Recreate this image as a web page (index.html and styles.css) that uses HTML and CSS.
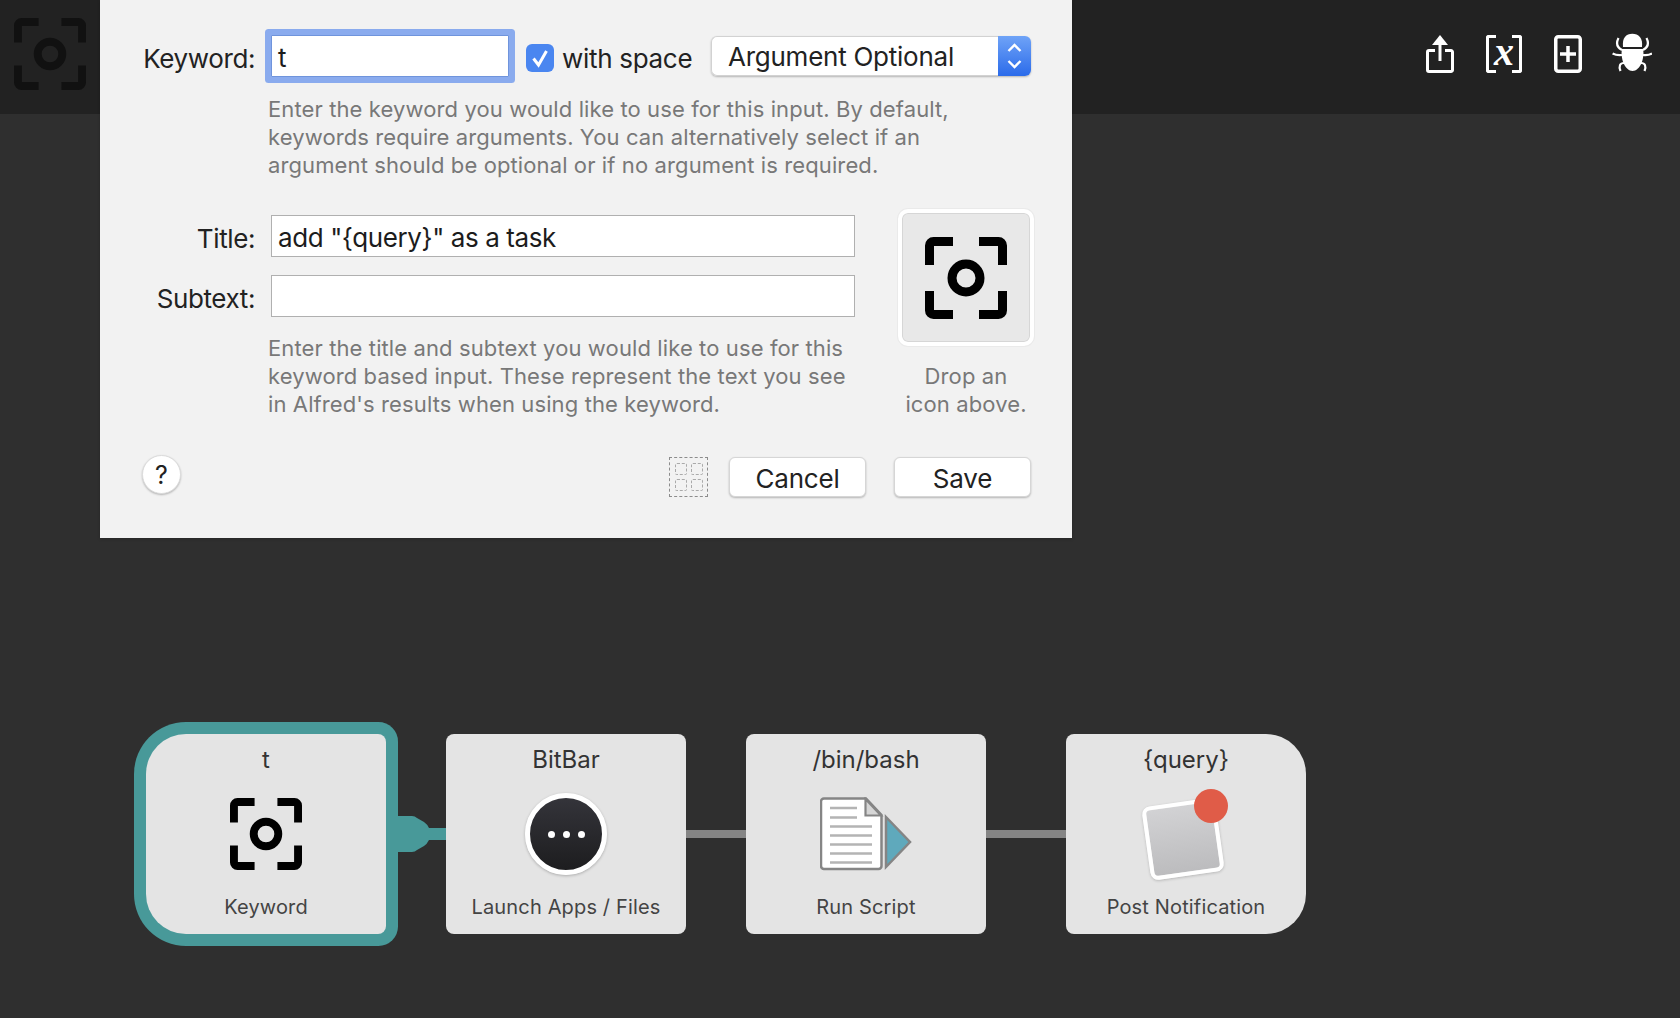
FILE: index.html
```html
<!DOCTYPE html>
<html lang="en">
<head>
<meta charset="utf-8">
<title>Workflow editor</title>
<link rel="stylesheet" href="styles.css">
</head>
<body>
<svg class="defs" width="0" height="0" aria-hidden="true">
  <symbol id="focus" viewBox="0 0 82 82">
    <g fill="none" stroke="currentColor" stroke-width="9">
      <path d="M28 4.500H8.500a4 4 0 0 0-4 4V28"/>
      <path d="M54 4.500H73.500a4 4 0 0 1 4 4V28"/>
      <path d="M28 77.500H8.500a4 4 0 0 1-4-4V54"/>
      <path d="M54 77.500H73.500a4 4 0 0 0 4-4V54"/>
      <circle cx="41" cy="41" r="14"/>
    </g>
  </symbol>
</svg>
<div class="app">
  <header class="toolbar">
    <svg class="tb-logo"><use href="#focus"/></svg>
    <div class="tb-actions">
      <svg class="tb-icon" viewBox="0 0 28 38" fill="none" stroke="#fff" stroke-width="3">
        <path d="M9 15.500H3a1.500 1.500 0 0 0-1.500 1.500V35a1.500 1.500 0 0 0 1.500 1.500H25a1.500 1.500 0 0 0 1.500-1.500V17a1.500 1.500 0 0 0-1.500-1.500H19"/>
        <path d="M14 8V26"/>
        <path d="M14 0L22 10H6Z" fill="#fff" stroke="none"/>
      </svg>
      <div class="tb-var"><span class="tb-x">x</span></div>
      <svg class="tb-icon" viewBox="0 0 28 38" fill="none" stroke="#fff">
        <rect x="1.750" y="1.750" width="24.500" height="34.500" rx="2.500" stroke-width="3.500"/>
        <path d="M14 11V27M6 19H22" stroke-width="3.500"/>
      </svg>
      <svg class="tb-bug" viewBox="0 0 40 40" fill="none" stroke="#fff" stroke-width="2.200">
        <path d="M11 14C10 5 14 .8 20.300 .8S31 5 30 14Z" fill="#fff" stroke="none"/>
        <path d="M10 16H31C33 25 28 38 20.500 38S8 25 10 16Z" fill="#fff" stroke="none"/>
        <path d="M10 17C6 15 3.500 11 6.500 5M31 17C35 15 37.500 11 34.500 5"/>
        <path d="M10 22C6 22.500 3.500 22 .6 20.500M31 22C35 22.500 37.500 22 40 20.500"/>
        <path d="M12 30C8 30 6.500 33 8.500 38M29 30C33 30 34.500 33 32.500 38"/>
      </svg>
    </div>
  </header>

  <main class="canvas">
    <article class="node node-first selected">
      <h3 class="node-title">t</h3>
      <div class="node-icon"><svg class="icon-keyword"><use href="#focus"/></svg></div>
      <p class="node-label">Keyword</p>
    </article>
    <svg class="link link-active" viewBox="0 0 60 40" width="60" height="40">
      <path d="M0 2H26Q29 2 31 4L38 8Q41 10 43 14H60V26H43Q41 30 38 32L31 36Q29 38 26 38H0Z" fill="#489999"/>
    </svg>
    <article class="node">
      <h3 class="node-title">BitBar</h3>
      <div class="node-icon"><div class="launch"><i></i><i></i><i></i></div></div>
      <p class="node-label">Launch Apps / Files</p>
    </article>
    <div class="link-line"></div>
    <article class="node">
      <h3 class="node-title">/bin/bash</h3>
      <div class="node-icon">
        <svg class="icon-script" viewBox="0 0 92 74" width="92" height="74">
          <path d="M4 1.500H46L61.500 18V69a3 3 0 0 1-3 3H4a3 3 0 0 1-3-3V4.500a3 3 0 0 1 3-3Z" fill="#fff" stroke="#858585" stroke-width="2.500"/>
          <path d="M45.500 2V18.500H61Z" fill="#d6d6d6" stroke="#858585" stroke-width="2.200"/>
          <g stroke="#b4b4b4" stroke-width="2.500">
            <path d="M10 11H37M10 20.500H37M10 29.500H52M10 38.500H52M10 47.500H52M10 56.500H52M10 65.500H52"/>
          </g>
          <path d="M66 20L90 45L66 70Z" fill="#5fa9bc" stroke="#858585" stroke-width="2.500"/>
        </svg>
      </div>
      <p class="node-label">Run Script</p>
    </article>
    <div class="link-line link-long"></div>
    <article class="node node-last">
      <h3 class="node-title">{query}</h3>
      <div class="node-icon">
        <div class="notify"><div class="notify-card"></div><div class="notify-dot"></div></div>
      </div>
      <p class="node-label">Post Notification</p>
    </article>
  </main>

  <section class="dialog">
    <div class="row-keyword">
      <span class="label">Keyword:</span>
      <div class="field field-focus">t</div>
      <span class="check"><svg viewBox="0 0 28 28" width="28" height="28" fill="none" stroke="#fff" stroke-width="3"><path d="M7.500 14.500L12.500 21L20.500 7"/></svg></span>
      <span class="check-text">with space</span>
      <div class="select">
        <span class="select-value">Argument Optional</span>
        <span class="select-arrows"><svg viewBox="0 0 33 40" width="33" height="40" fill="none" stroke="#fff" stroke-width="2.400"><path d="M10.500 15L16.500 9L22.500 15M10.500 25L16.500 31L22.500 25"/></svg></span>
      </div>
    </div>
    <p class="help help-keyword">Enter the keyword you would like to use for this input. By default,<br>keywords require arguments. You can alternatively select if an<br>argument should be optional or if no argument is required.</p>

    <div class="details">
      <div class="details-main">
        <div class="row-field">
          <span class="label">Title:</span>
          <div class="field field-wide">add "{query}" as a task</div>
        </div>
        <div class="row-field">
          <span class="label">Subtext:</span>
          <div class="field field-wide"></div>
        </div>
        <p class="help help-title">Enter the title and subtext you would like to use for this<br>keyword based input. These represent the text you see<br>in Alfred's results when using the keyword.</p>
      </div>
      <div class="details-side">
        <div class="well"><svg class="well-icon"><use href="#focus"/></svg></div>
        <p class="help well-text">Drop an<br>icon above.</p>
      </div>
    </div>

    <footer class="dialog-foot">
      <button class="help-btn">?</button>
      <div class="drop-grid"><i></i><i></i><i></i><i></i></div>
      <button class="btn">Cancel</button>
      <button class="btn btn-save">Save</button>
    </footer>
  </section>
</div>
</body>
</html>
```

FILE: styles.css
```css
* { box-sizing: border-box; }
html, body { margin: 0; height: 100%; }
body {
  background: #2f2f2f;
  font-family: Inter, "Liberation Sans", sans-serif;
  overflow: hidden;
}
.defs { position: absolute; }
.app { position: relative; width: 1680px; height: 1018px; overflow: hidden; }

/* toolbar */
.toolbar {
  height: 114px;
  background: #222;
  display: flex;
  align-items: flex-start;
  padding: 18px 28px 0 14px;
}
.tb-logo { width: 72px; height: 72px; color: #111; }
.tb-actions { margin-left: auto; display: flex; align-items: flex-start; gap: 32px; padding-top: 17px; }
.tb-icon { height: 38px; width: 28px; display: block; }
.tb-var {
  width: 36px; height: 38px;
  display: flex; align-items: center; justify-content: center;
  position: relative;
}
.tb-var::before, .tb-var::after {
  content: "";
  position: absolute; top: 0; bottom: 0;
  width: 7px;
  border: 3px solid #fff;
}
.tb-var::before { left: 0; border-right: 0; border-radius: 3px 0 0 3px; }
.tb-var::after { right: 0; border-left: 0; border-radius: 0 3px 3px 0; }
.tb-x { font: italic bold 40px/38px "Liberation Serif", serif; color: #fff; margin-top: -4px; }
.tb-bug { width: 40px; height: 40px; margin: -2px 0 0 -2px; }

/* canvas */
.canvas { display: flex; align-items: center; padding: 620px 0 0 146px; }
.node {
  width: 240px;
  height: 200px;
  flex: none;
  background: #e4e4e4;
  border-radius: 8px;
  display: flex;
  flex-direction: column;
  align-items: center;
  color: #333;
}
.node-first { border-radius: 40px 8px 8px 40px; }
.node-last { border-radius: 8px 40px 40px 8px; }
.selected { box-shadow: 0 0 0 12px #489999; }
.node-title { margin: 12px 0 0; font-size: 24px; line-height: 28px; font-weight: 400; color: #333; }
.node-icon { height: 100px; margin-top: 10px; display: flex; align-items: center; justify-content: center; width: 100%; }
.node-label { margin: 10px 0 0; font-size: 20px; line-height: 26px; letter-spacing: .15px; color: #444; }
.icon-keyword { width: 72px; height: 72px; color: #000; }

.link-active { flex: none; }
.link-line { width: 60px; height: 8px; background: #858585; flex: none; }
.link-long { width: 80px; }

.launch {
  width: 82px; height: 82px; border-radius: 50%;
  border: 5px solid #fff;
  background: linear-gradient(#34343a, #1d1d1f);
  box-shadow: 0 1px 3px rgba(0,0,0,.25);
  display: flex; align-items: center; justify-content: center; gap: 8px;
}
.launch i { width: 7px; height: 7px; border-radius: 50%; background: #fff; }
.notify { position: relative; width: 92px; height: 90px; }
.notify-card {
  position: absolute; left: 6px; top: 13px;
  width: 74px; height: 74px;
  border: 4px solid #fff; border-radius: 8px;
  background: linear-gradient(#d2d2d4, #bcbcbe);
  box-shadow: 0 1px 3px rgba(0,0,0,.2);
  transform: rotate(-8deg);
}
.notify-dot {
  position: absolute; left: 54px; top: 0;
  width: 34px; height: 34px; border-radius: 50%;
  background: #e05c48;
}

/* dialog */
.dialog {
  position: absolute; left: 100px; top: 0;
  width: 972px; height: 538px;
  background: #f2f2f2;
  box-shadow: 0 1px 3px rgba(0,0,0,.2);
  padding: 35px 41px 0 0;
  color: #222;
}
.label { width: 155px; height: 42px; text-align: right; font-size: 26px; line-height: 48px; flex: none; color: #222; letter-spacing: -.4px; }
.row-keyword { display: flex; align-items: center; height: 42px; }
.field {
  height: 42px;
  background: #fff;
  border: 1px solid #b0b0b0;
  font-size: 26px;
  line-height: 44px;
  padding-left: 6px;
  color: #1c1c1c;
  letter-spacing: -.4px;
}
.field-focus {
  width: 238px;
  margin-left: 16px;
  border-color: #6f94dc;
  box-shadow: 0 0 0 6px #8aabee;
  border-radius: 1px;
}
.check {
  width: 28px; height: 28px; margin-left: 17px; margin-top: 4px;
  background: #4a86f0; border-radius: 6px; flex: none;
}
.check svg { display: block; }
.check-text { margin-left: 8px; font-size: 26px; line-height: 42px; margin-top: 6px; color: #222; letter-spacing: -.3px; }
.select {
  margin-left: auto;
  width: 320px; height: 40px;
  border-radius: 6px;
  box-shadow: 0 1px 2px rgba(0,0,0,.25);
  display: flex;
}
.select-value {
  flex: 1;
  background: #fff;
  border: 1px solid #d2d2d2;
  border-right: 0;
  border-radius: 6px 0 0 6px;
  padding-left: 16px;
  font-size: 26px;
  line-height: 40px;
  color: #222;
  letter-spacing: -.25px;
}
.select-arrows { width: 33px; background: linear-gradient(#6fa3f7, #2b6bea); flex: none; border-radius: 0 6px 6px 0; }
.select-arrows svg { display: block; }

.help { margin: 0; font-size: 22px; line-height: 28px; color: #787878; letter-spacing: .11px; }
.help-keyword { margin: 18px 0 0 168px; height: 84px; }

.details { display: flex; margin-top: 30px; }
.details-main { width: 755px; flex: none; padding-top: 6px; }
.row-field { display: flex; align-items: center; margin-bottom: 18px; }
.field-wide { width: 584px; margin-left: 16px; }
.help-title { margin: -1px 0 0 168px; }
.details-side { width: 136px; margin-left: 43px; flex: none; text-align: center; }
.well {
  width: 136px; height: 137px;
  background: #e8e8e8;
  background-clip: padding-box;
  border: 4px solid #fff;
  border-radius: 10px;
  display: flex; align-items: center; justify-content: center;
  box-shadow: inset 0 0 0 1px #d6d6d6, 0 0 0 1px #eaeaea;
}
.well-icon { width: 82px; height: 82px; color: #000; }
.well-text { margin-top: 16px; white-space: nowrap; }

.dialog-foot { display: flex; align-items: center; padding: 39px 0 0 42px; }
.help-btn {
  width: 39px; height: 39px; border-radius: 50%;
  border: 1px solid #dcdcdc; background: #fff;
  box-shadow: 0 1px 2px rgba(0,0,0,.25);
  font: 25px Inter, sans-serif; color: #222; padding: 0;
  margin-right: auto; margin-top: -5px;
}
.drop-grid {
  width: 39px; height: 40px;
  border: 1px dashed #8c8c8c;
  display: grid;
  grid-template-columns: 12px 12px;
  grid-template-rows: 12px 12px;
  gap: 4px;
  justify-content: center;
  align-content: center;
  margin-right: 21px;
}
.drop-grid i { border: 1px dashed #aaa; border-radius: 2px; }
.btn {
  width: 137px; height: 40px;
  background: #fff; border: 1px solid #d6d6d6; border-radius: 6px;
  box-shadow: 0 1px 2px rgba(0,0,0,.25);
  font: 26px Inter, sans-serif; color: #222; padding: 2px 0 0; letter-spacing: -.2px;
}
.btn-save { margin-left: 28px; }
```
